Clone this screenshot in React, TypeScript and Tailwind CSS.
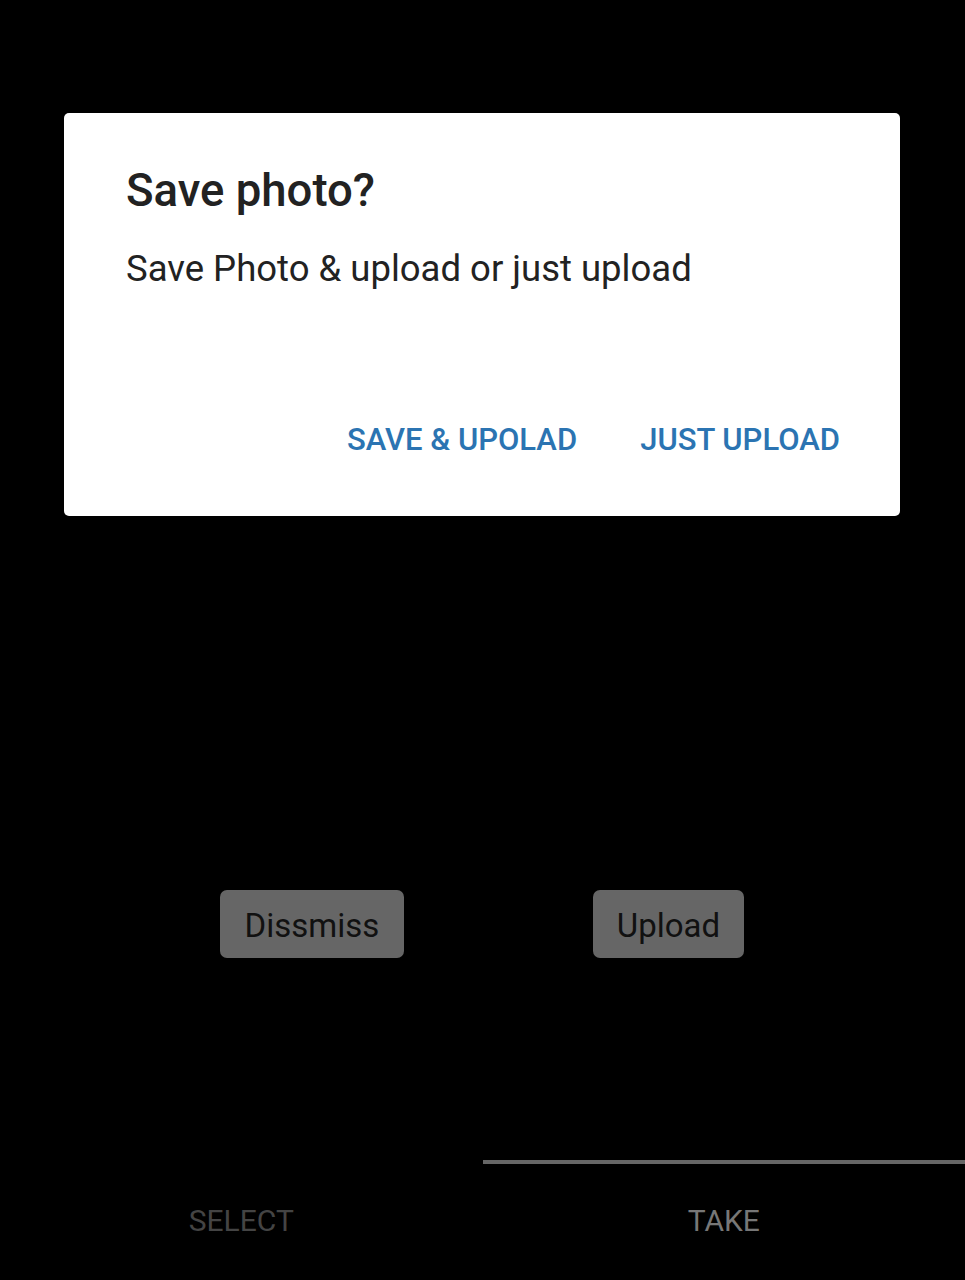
export default function App() {
  return (
    <div className="flex h-[1280px] w-full flex-col bg-black font-['Roboto',sans-serif]">
      {/* Dialog */}
      <div className="ml-[64px] mr-[65px] mt-[113px] flex h-[403px] flex-col rounded-[5px] bg-white pl-[62px] pr-[60px] pt-[56px] pb-[56px]">
        <h2 className="text-[45.5px] font-medium leading-[44px] text-[#222]">Save photo?</h2>
        <p className="mt-[34px] text-[36.5px] leading-[44px] text-[#222]">Save Photo &amp; upload or just upload</p>
        <div className="mt-auto flex justify-end gap-[63px]">
          <button className="text-[31px] font-medium leading-[40px] text-[#2b74b2]">SAVE &amp; UPOLAD</button>
          <button className="text-[31px] font-medium leading-[40px] text-[#2b74b2]">JUST UPLOAD</button>
        </div>
      </div>

      {/* Action buttons */}
      <div className="mt-[374px] flex gap-[189px] pl-[220px]">
        <button className="h-[68px] w-[184px] rounded-[7px] bg-[#666] pt-[4px] text-[33px] text-[#111]">Dissmiss</button>
        <button className="h-[68px] w-[151px] rounded-[7px] bg-[#666] pt-[4px] text-[33px] text-[#111]">Upload</button>
      </div>

      {/* Tabs */}
      <div className="mt-auto flex h-[120px]">
        <div className="flex flex-1 items-center justify-center border-t-[4px] border-transparent pb-[4px]">
          <span className="text-[30px] text-[#444]">SELECT</span>
        </div>
        <div className="flex flex-1 items-center justify-center border-t-[4px] border-[#666] pb-[4px]">
          <span className="text-[30px] text-[#777]">TAKE</span>
        </div>
      </div>
    </div>
  );
}
